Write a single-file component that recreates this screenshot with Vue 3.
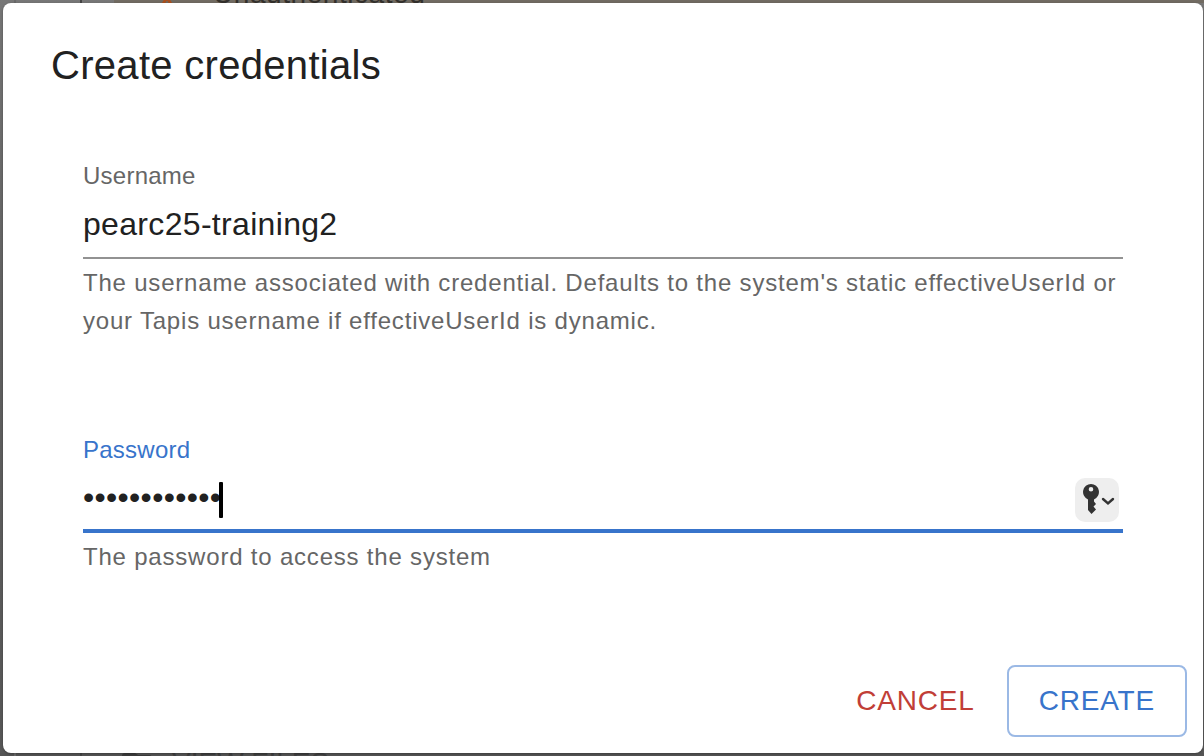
<script setup>
import { ref } from 'vue'

const username = ref('pearc25-training2')
const password = ref('training2025')
</script>

<template>
  <div class="screen">
    <div class="page" aria-hidden="true">
      <div class="strip strip-top">
        <div class="rail"></div>
        <div class="alert">
          <svg class="warn" width="26" height="24" viewBox="0 0 26 24">
            <path d="M8 27 13 18 18 27" fill="none" stroke="#a9501f" stroke-width="3" />
          </svg>
          <span class="alert-text">Unauthenticated</span>
        </div>
      </div>
      <div class="strip strip-bottom">
        <div class="rail"></div>
        <div class="files">
          <svg width="30" height="24" viewBox="0 0 30 24">
            <path d="M0 3q0-3 3-3h10l3 2h11q3 0 3 3v18H0Z" fill="#3c3c3c" />
          </svg>
          <span>VIEW FILES</span>
        </div>
      </div>
    </div>

    <form class="dialog" role="dialog" aria-labelledby="dialog-title" @submit.prevent>
      <h2 id="dialog-title" class="title">Create credentials</h2>
      <div class="content">
        <div class="field">
          <label for="username">Username</label>
          <div class="control">
            <input id="username" v-model="username" type="text" autocomplete="off" aria-describedby="username-help" />
          </div>
          <p id="username-help" class="help">
            The username associated with credential. Defaults to the system's static effectiveUserId or your Tapis
            username if effectiveUserId is dynamic.
          </p>
        </div>
        <div class="field active">
          <label for="password">Password</label>
          <div class="control">
            <input id="password" v-model="password" type="password" autocomplete="off" aria-describedby="password-help" />
            <span class="caret"></span>
            <button class="key" type="button" aria-label="Saved passwords">
              <svg width="44" height="44" viewBox="0 0 44 44">
                <path
                  fill="#333"
                  fill-rule="evenodd"
                  d="M16 6a8 8 0 0 0-3 15.400V32l3.500 4 4.500-4.500-2.500-3 2.500-2.500-2-2.500V21.400A8 8 0 0 0 16 6Zm0 3a2.300 2.300 0 1 1 0 4.600a2.300 2.300 0 0 1 0-4.600Z"
                />
                <path d="m28 21 5 4.500 5-4.500" fill="none" stroke="#333" stroke-width="2.400" stroke-linecap="round" />
              </svg>
            </button>
          </div>
          <p id="password-help" class="help">The password to access the system</p>
        </div>
      </div>
      <div class="actions">
        <button class="btn cancel" type="button">CANCEL</button>
        <button class="btn create" type="submit">CREATE</button>
      </div>
    </form>
  </div>
</template>

<style>
body {
  margin: 0;
}
</style>

<style scoped>
.screen {
  position: relative;
  min-height: 100vh;
  overflow: hidden;
  box-sizing: border-box;
  padding: 3px 1px 3px 3px;
  display: flex;
  font-family: "Liberation Sans", Arial, Helvetica, sans-serif;
  background: #666;
}

.page {
  position: absolute;
  inset: 0;
  display: flex;
  flex-direction: column;
  justify-content: space-between;
  background: linear-gradient(#777, #626262 40%, #585858);
}

.strip {
  display: flex;
  height: 3px;
}

.rail {
  flex: none;
  width: 64px;
  margin-left: 14px;
  border-left: 2px solid #6a6a6a;
  border-right: 2px solid #444;
}

.alert {
  flex: 1;
  display: flex;
  align-items: flex-end;
  height: 3px;
  margin-left: 32px;
  background: #716b62;
}

.warn {
  flex: none;
  margin-left: 40px;
}

.alert-text {
  margin-left: 33px;
  font-size: 28px;
  line-height: 32px;
  height: 25px;
  letter-spacing: 0.02em;
  color: #33302c;
}

.strip-bottom {
  background: #555;
}

.files {
  display: flex;
  align-items: flex-start;
  gap: 20px;
  margin-left: 40px;
  font-size: 28px;
  line-height: 20px;
  color: #404040;
}

.dialog {
  position: relative;
  flex: 1;
  display: flex;
  flex-direction: column;
  border-radius: 8px;
  background: #fff;
  color: #212121;
  box-shadow: 0 1px 3px rgba(0, 0, 0, 0.3);
}

.title {
  margin: 0;
  padding: 32px 48px;
  font-size: 40px;
  line-height: 61px;
  font-weight: 400;
  letter-spacing: 0.0075em;
}

.content {
  flex: 1;
  display: flex;
  flex-direction: column;
  gap: 94px;
  padding: 32px 80px 0;
}

.field {
  display: flex;
  flex-direction: column;
}

label {
  font-size: 24px;
  line-height: 32px;
  letter-spacing: 0.01em;
  color: #666;
}

.control {
  position: relative;
  display: flex;
  align-items: center;
  box-sizing: border-box;
  height: 67px;
  border-bottom: 2px solid #929292;
}

input {
  flex: 1;
  min-width: 0;
  height: 48px;
  padding: 0;
  border: 0;
  outline: 0;
  background: none;
  color: #212121;
  font: inherit;
  font-size: 32px;
  letter-spacing: 0.01em;
}

.active label {
  color: #3874cb;
}

.active .control {
  border-bottom: 4px solid #3874cb;
}

.caret {
  position: absolute;
  left: 136px;
  top: 16px;
  width: 4px;
  height: 36px;
  border-radius: 1px;
  background: #000;
}

.key {
  display: block;
  align-self: flex-end;
  width: 44px;
  height: 44px;
  margin: 0 4px 7px 0;
  padding: 0;
  border: 0;
  border-radius: 10px;
  background: #eee;
}

.key svg {
  display: block;
}

.help {
  margin: 5px 0 0;
  font-size: 24px;
  line-height: 38px;
  letter-spacing: 0.03333em;
  color: #666;
}

.actions {
  display: flex;
  justify-content: flex-end;
  gap: 16px;
  padding: 16px;
}

.btn {
  height: 72px;
  padding: 0 16px;
  border: 0;
  border-radius: 8px;
  background: none;
  font: inherit;
  font-size: 28px;
  letter-spacing: 0.02857em;
}

.cancel {
  color: #c13e37;
}

.create {
  padding: 0 30px;
  border: 2px solid #9bb9e5;
  color: #3874cb;
}
</style>
